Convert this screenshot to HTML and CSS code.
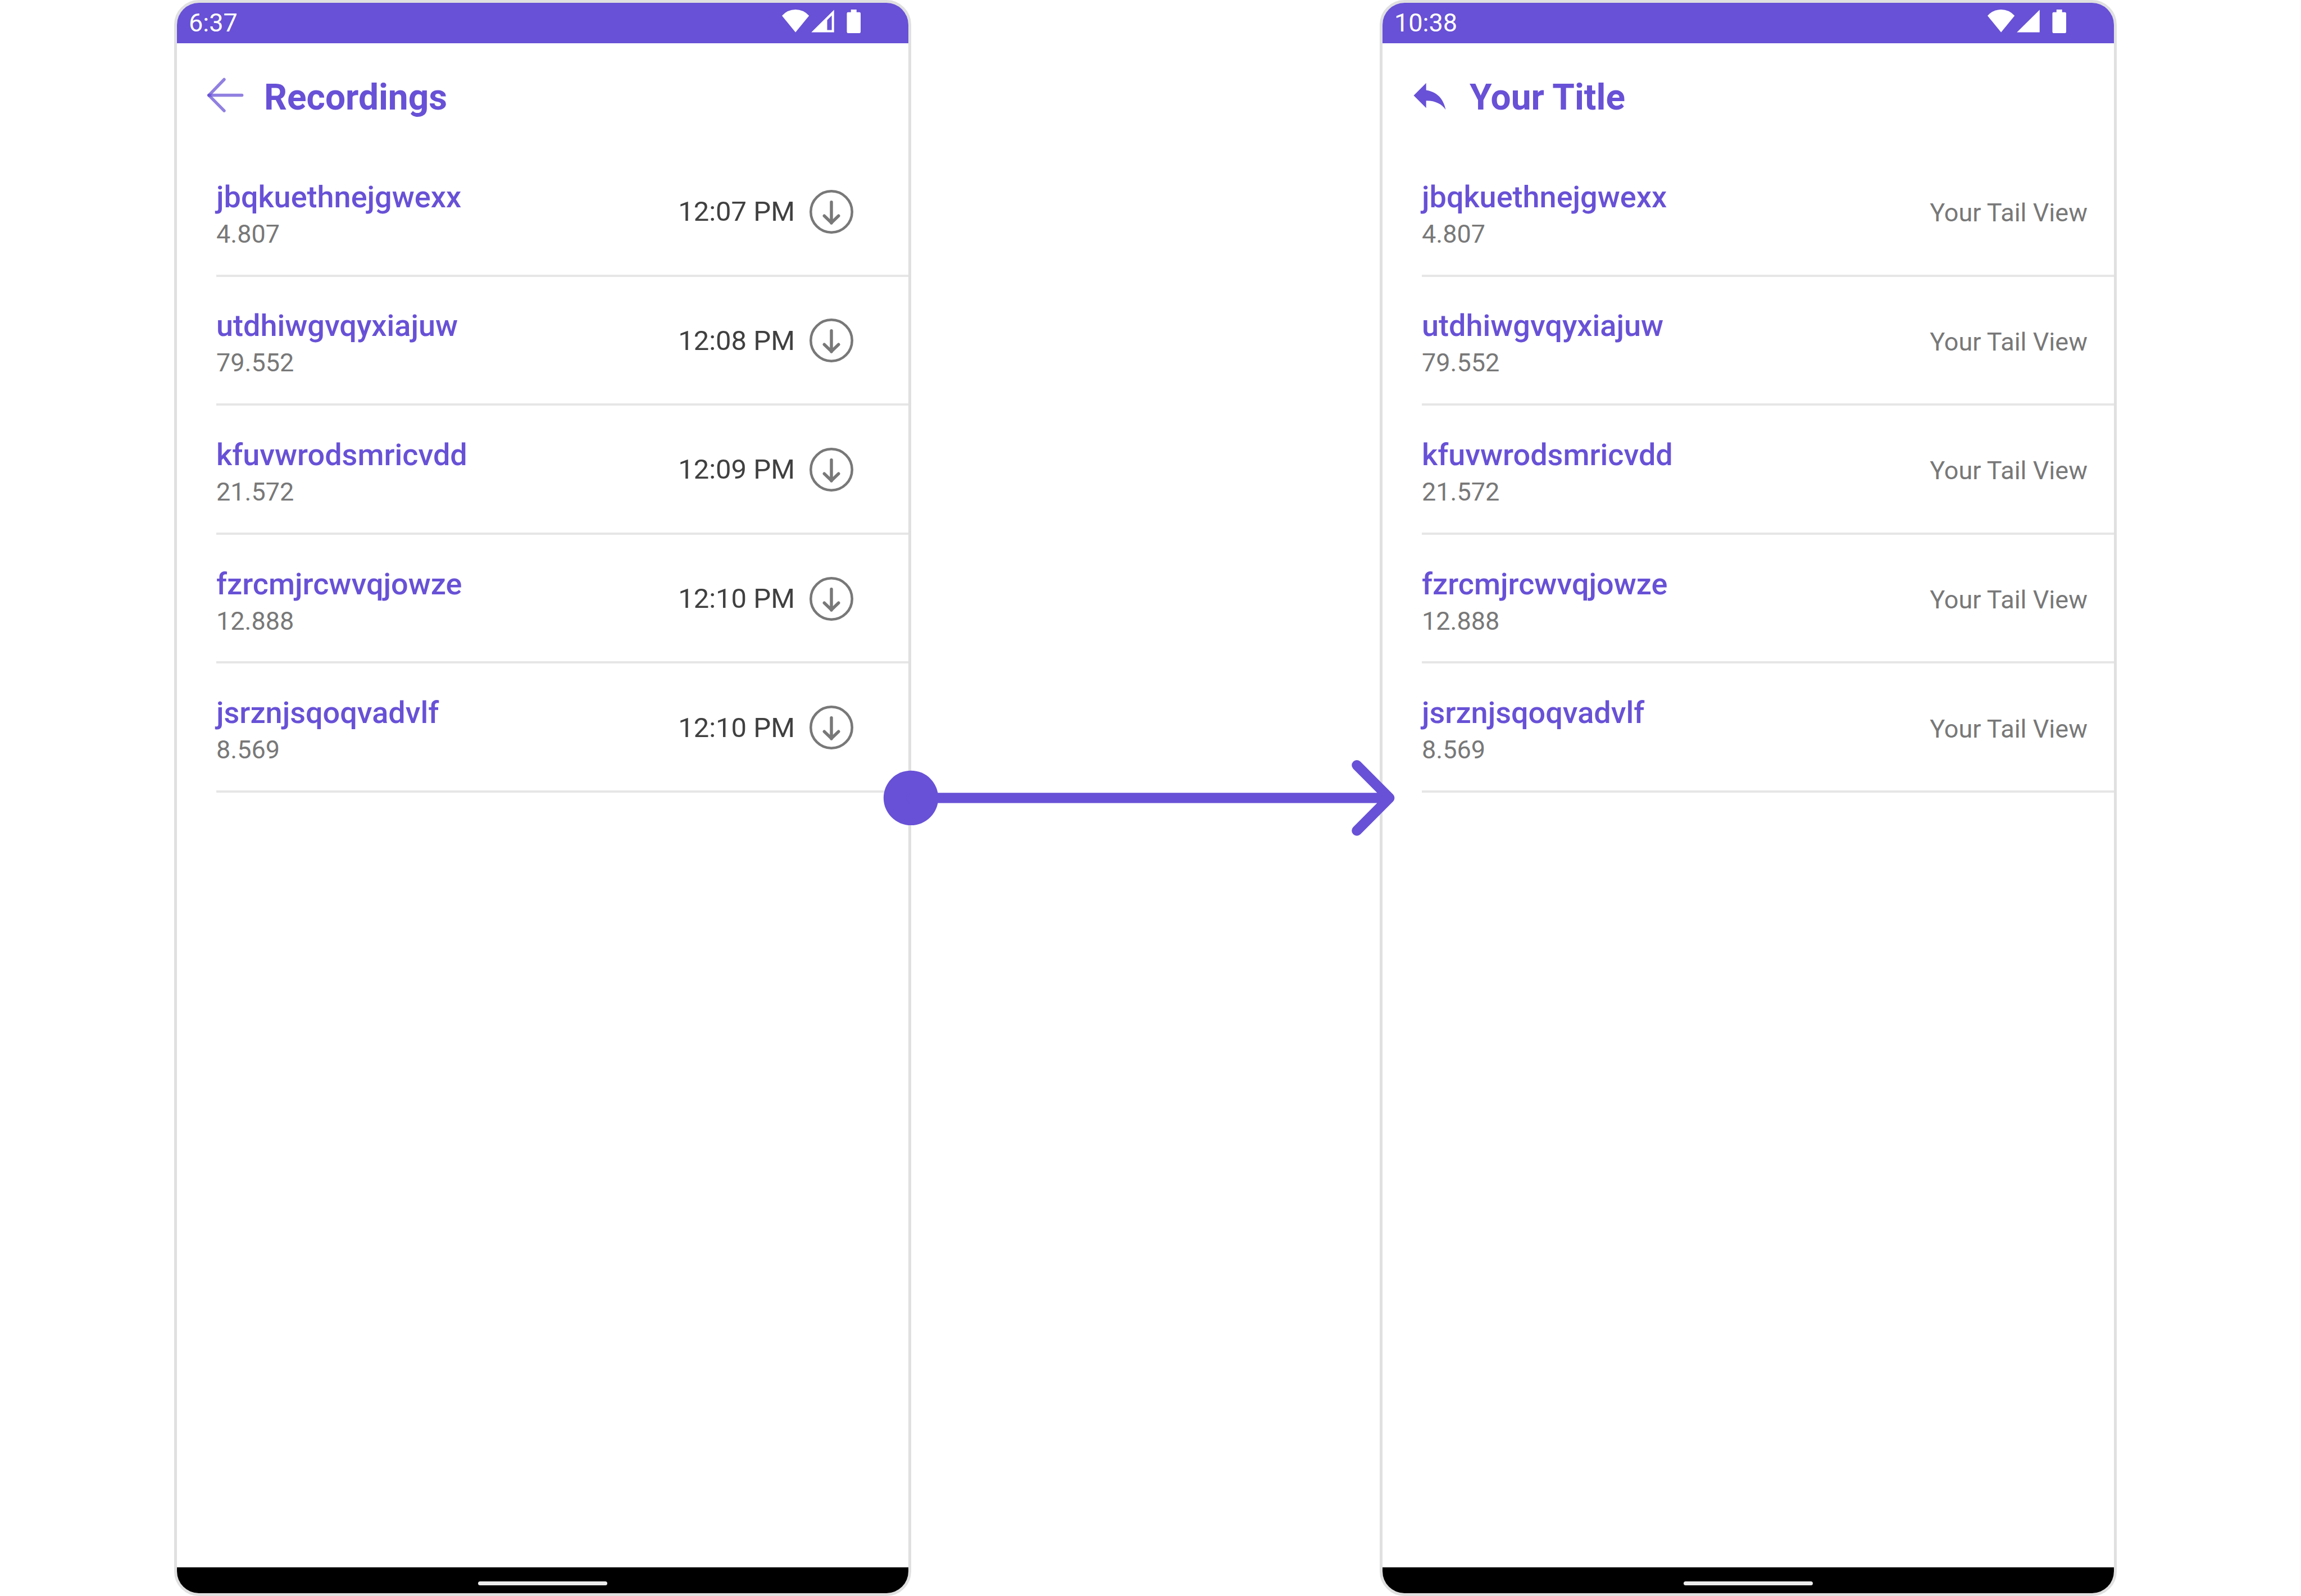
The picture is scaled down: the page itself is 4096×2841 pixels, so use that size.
FILE: index.html
```html
<!DOCTYPE html>
<html lang="en">
<head>
<meta charset="utf-8">
<meta name="viewport" content="width=device-width, initial-scale=1">
<title>Recordings</title>
<link rel="stylesheet" href="styles.css">
</head>
<body>
<svg class="sprite" aria-hidden="true">
  <symbol id="download" viewBox="0 0 86 86">
    <g fill="none" stroke="currentColor" stroke-width="5" stroke-linecap="round">
      <circle cx="43" cy="43" r="40.5"/>
      <path d="M43 24V65M29 51L43 64.500L57 51" stroke-width="6"/>
    </g>
  </symbol>
</svg>
<main class="stage">
  <section class="phone phone-before">
    <header class="status-bar">
      <time>6:37</time>
      <svg class="status-icons" viewBox="0 0 154 46" aria-hidden="true">
        <path fill="currentColor" d="M0 12Q11 0 26.500 0T53 12L26.500 44.500Z"/>
        <path fill="currentColor" fill-rule="evenodd" d="M102 .500V44.500H57.500ZM97.500 11.500L88.500 20.500V40H97.500Z"/>
        <path fill="currentColor" d="M135 0H146V5H151.500Q154 5 154 7.500V43.500Q154 46 151.500 46H129.500Q127 46 127 43.500V7.500Q127 5 129.500 5H135Z"/>
      </svg>
    </header>
    <div class="app-bar">
      <button class="icon-button back" type="button" aria-label="Back">
        <svg viewBox="0 0 84 84" fill="none" stroke="currentColor" stroke-width="6" stroke-linecap="round" stroke-linejoin="round">
          <path d="M42 10.500L12 41.500" opacity=".73"/>
          <path d="M12 41.500L42 72" opacity=".73"/>
          <path d="M12 41.500H77" opacity=".73"/>
        </svg>
      </button>
      <h1>Recordings</h1>
    </div>
    <ul class="list">
      <li><div class="info"><h2>jbqkuethnejgwexx</h2><p>4.807</p></div><time class="time">12:07 PM</time><button class="icon-button download" type="button" aria-label="Download"><svg><use href="#download"/></svg></button></li>
      <li><div class="info"><h2>utdhiwgvqyxiajuw</h2><p>79.552</p></div><time class="time">12:08 PM</time><button class="icon-button download" type="button" aria-label="Download"><svg><use href="#download"/></svg></button></li>
      <li><div class="info"><h2>kfuvwrodsmricvdd</h2><p>21.572</p></div><time class="time">12:09 PM</time><button class="icon-button download" type="button" aria-label="Download"><svg><use href="#download"/></svg></button></li>
      <li><div class="info"><h2>fzrcmjrcwvqjowze</h2><p>12.888</p></div><time class="time">12:10 PM</time><button class="icon-button download" type="button" aria-label="Download"><svg><use href="#download"/></svg></button></li>
      <li><div class="info"><h2>jsrznjsqoqvadvlf</h2><p>8.569</p></div><time class="time">12:10 PM</time><button class="icon-button download" type="button" aria-label="Download"><svg><use href="#download"/></svg></button></li>
    </ul>
    <footer class="nav-bar"><span class="handle"></span></footer>
  </section>

  <svg class="connector" viewBox="1781 1486 916 148" aria-hidden="true">
    <circle cx="1780.500" cy="1560" r="53.500" fill="currentColor"/>
    <path d="M1781 1560H2716M2652.300 1496L2716 1560L2652.300 1624" fill="none" stroke="currentColor" stroke-width="20" stroke-linecap="round" stroke-linejoin="round"/>
  </svg>

  <section class="phone phone-after">
    <header class="status-bar">
      <time>10:38</time>
      <svg class="status-icons" viewBox="0 0 154 46" aria-hidden="true">
        <path fill="currentColor" d="M0 12Q11 0 26.500 0T53 12L26.500 44.500Z"/>
        <path fill="currentColor" d="M102 .500V44.500H57.500Z"/>
        <path fill="currentColor" d="M135 0H146V5H151.500Q154 5 154 7.500V43.500Q154 46 151.500 46H129.500Q127 46 127 43.500V7.500Q127 5 129.500 5H135Z"/>
      </svg>
    </header>
    <div class="app-bar">
      <button class="icon-button back" type="button" aria-label="Back">
        <svg viewBox="0 0 24 24" fill="currentColor"><path d="M10 9V5l-7 7 7 7v-4.100c5 0 8.500 1.600 11 5.100-1-5-4-10-11-11z"/></svg>
      </button>
      <h1>Your Title</h1>
    </div>
    <ul class="list">
      <li><div class="info"><h2>jbqkuethnejgwexx</h2><p>4.807</p></div><span class="tail">Your Tail View</span></li>
      <li><div class="info"><h2>utdhiwgvqyxiajuw</h2><p>79.552</p></div><span class="tail">Your Tail View</span></li>
      <li><div class="info"><h2>kfuvwrodsmricvdd</h2><p>21.572</p></div><span class="tail">Your Tail View</span></li>
      <li><div class="info"><h2>fzrcmjrcwvqjowze</h2><p>12.888</p></div><span class="tail">Your Tail View</span></li>
      <li><div class="info"><h2>jsrznjsqoqvadvlf</h2><p>8.569</p></div><span class="tail">Your Tail View</span></li>
    </ul>
    <footer class="nav-bar"><span class="handle"></span></footer>
  </section>
</main>
</body>
</html>
```

FILE: styles.css
```css
:root {
  --primary: #6851d6;
  --muted: #787878;
  --text: #404040;
}

* {
  box-sizing: border-box;
  margin: 0;
  padding: 0;
}

body {
  background: #fff;
  font-family: Roboto, "Liberation Sans", sans-serif;
}

.sprite {
  display: none;
}

.stage {
  display: grid;
  grid-template-columns: 310fr 1312fr 834fr 1312fr 328fr;
  min-height: 100vh;
}

.phone {
  display: flex;
  flex-direction: column;
  overflow: hidden;
  border: 5px solid #e0e0e0;
  border-radius: 44px;
  background: #fff;
}

.phone-before {
  grid-column: 2;
}

.phone-after {
  grid-column: 4;
}

.connector {
  grid-column: 3;
  align-self: center;
  z-index: 1;
  width: 100%;
  overflow: visible;
  color: var(--primary);
}

.status-bar {
  display: flex;
  align-items: center;
  justify-content: space-between;
  height: 72px;
  padding: 0 85px 2px 21px;
  background: var(--primary);
  color: #fff;
  font-size: 45px;
}

.status-icons {
  width: 140px;
  height: 42px;
  margin-bottom: 4px;
}

.app-bar {
  display: flex;
  align-items: center;
  gap: 33px;
  height: 186px;
  padding-left: 46px;
  color: var(--primary);
}

.app-bar h1 {
  padding-top: 6px;
  font-size: 64px;
  font-weight: 700;
}

.icon-button {
  flex: none;
  border: 0;
  background: none;
  color: inherit;
  cursor: pointer;
}

.icon-button svg {
  display: block;
  width: 100%;
  height: 100%;
}

.back {
  width: 76px;
  height: 76px;
}

.download {
  width: 78px;
  height: 78px;
  margin: 0 98px 0 26px;
  color: var(--muted);
}

.list {
  display: grid;
  grid-template-rows: repeat(5, 1fr);
  min-height: 1148px;
  padding-left: 70px;
  list-style: none;
}

.list li {
  display: flex;
  align-items: center;
  padding-top: 2px;
  border-bottom: 4px solid #e6e6e6;
}

.info {
  flex: 1;
  padding-top: 8px;
}

.info h2 {
  color: var(--primary);
  font-size: 54px;
  font-weight: 500;
  line-height: 72px;
}

.info p {
  color: var(--muted);
  font-size: 45px;
  line-height: 60px;
}

.time {
  color: var(--text);
  font-size: 49px;
}

.tail {
  padding: 4px 47px 0 0;
  color: var(--muted);
  font-size: 45px;
}

.nav-bar {
  display: flex;
  justify-content: center;
  height: 46px;
  margin-top: auto;
  padding-top: 25px;
  background: #000;
}

.handle {
  width: 230px;
  height: 7px;
  border-radius: 4px;
  background: #ebebeb;
}
```
